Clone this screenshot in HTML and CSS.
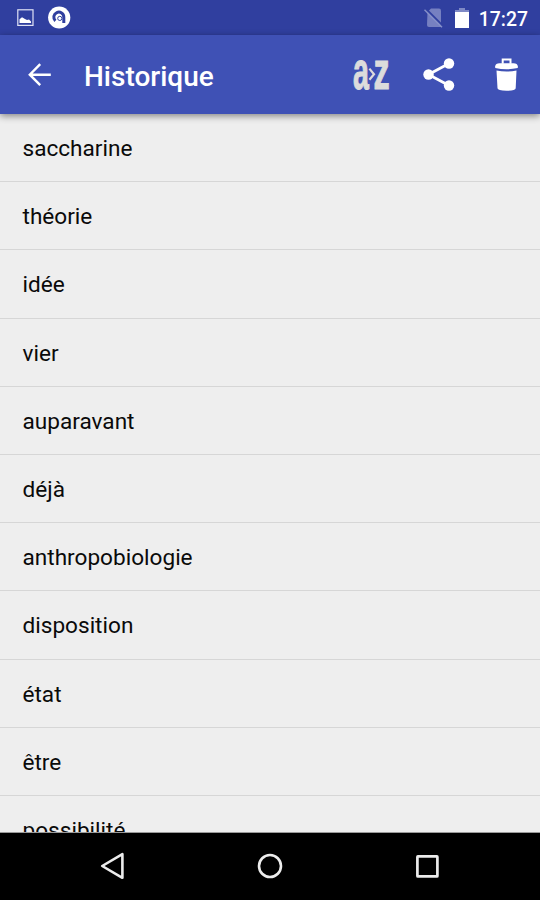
FILE: index.html
```html
<!DOCTYPE html>
<html lang="fr">
<head>
    <meta charset="UTF-8">
    <meta name="viewport" content="width=device-width, initial-scale=1.0">
    <title>Historique</title>
    <link rel="stylesheet" href="styles.css">
</head>
<body>
    <div class="screen">
        <div class="status-bar">
            <svg class="status-icon" width="18" height="18" viewBox="0 0 18 18">
                <rect x="0.8" y="0.8" width="15.2" height="15.6" fill="none" stroke="#dfe2f5" stroke-width="1.2"/>
                <path d="M2.5 14V10.2L5 8.2L8 10L10 11L12 10.5L14 12.5V14Z" fill="#fff"/>
            </svg>
            <svg class="status-icon" width="23" height="23" viewBox="0 0 23 23">
                <circle cx="11.2" cy="11.5" r="11.1" fill="#fff"/>
                <path d="M7.4 14.8A5 5 0 1 1 15.8 11.2V17" fill="none" stroke="#303f9f" stroke-width="3"/>
                <circle cx="11.8" cy="12.4" r="2.1" fill="#fff" stroke="#303f9f" stroke-width="1"/>
            </svg>
            <span class="spacer"></span>
            <svg class="no-sim" width="20" height="20" viewBox="0 0 20 20">
                <path d="M3.5 4L7 0.5H15Q17 0.5 17 2.5V19H5Q3 19 3 17Z" fill="#7680c1"/>
                <path d="M1.5 0.5L19 18" stroke="#303f9f" stroke-width="2"/>
                <path d="M0.5 1.8L18 19.3" stroke="#8790c9" stroke-width="1.5"/>
            </svg>
            <svg class="battery" width="14" height="20" viewBox="0 0 14 20">
                <path d="M0 4V2H4V0H10V2H14V4Z" fill="#7f89c5"/>
                <path d="M0 4H14V20H0Z" fill="#fff"/>
            </svg>
            <span class="clock">17:27</span>
        </div>
        <div class="toolbar">
            <svg class="back" width="24" height="24" viewBox="0 0 24 24">
                <path d="M12.2 1.2L1.8 11.7L12.2 22.2M1.8 11.7H22.8" fill="none" stroke="#fff" stroke-width="2.4"/>
            </svg>
            <h1>Historique</h1>
            <span class="spacer"></span>
            <svg class="sort" width="40" height="76" viewBox="-1 -21 40 76">
                <g class="sort-letters">
                    <text transform="translate(0 30.8) scale(0.54 1)">a</text>
                    <text transform="translate(20.6 30.8) scale(0.61 1)">z</text>
                </g>
                <path d="M16.4 10.6L21 16.2L16.4 21.8" fill="none" stroke="#3f51b5" stroke-width="4"/>
                <path d="M16.4 10.6L21 16.2L16.4 21.8" fill="none" stroke="#dcdcdc" stroke-width="2.2"/>
            </svg>
            <svg class="share" width="32" height="34" viewBox="0 0 32 34">
                <path d="M26 5.5L5.5 16.5L26 27.5" fill="none" stroke="#fff" stroke-width="2.8"/>
                <circle cx="26" cy="5.5" r="5.2" fill="#fff"/>
                <circle cx="5.5" cy="16.5" r="5.2" fill="#fff"/>
                <circle cx="26" cy="27.5" r="5.2" fill="#fff"/>
            </svg>
            <svg class="trash" width="24" height="34" viewBox="0 0.7 24 34">
                <path d="M7.7 6.5V2.1H15.5V6.5" fill="none" stroke="#fff" stroke-width="2"/>
                <path d="M0.2 10.8V9Q0.5 6 4.5 6H18.5Q22.5 6 22.8 9V10.8Q11.5 13.2 0.2 10.8Z" fill="#fff"/>
                <path d="M1.5 13.2Q11.5 15.3 21.5 13.2L20.7 31Q20.5 33.4 11.5 33.5Q2.7 33.4 2.5 31Z" fill="#fff"/>
            </svg>
        </div>
        <ul class="history">
            <li>saccharine</li>
            <li>théorie</li>
            <li>idée</li>
            <li>vier</li>
            <li>auparavant</li>
            <li>déjà</li>
            <li>anthropobiologie</li>
            <li>disposition</li>
            <li>état</li>
            <li>être</li>
            <li>possibilité</li>
        </ul>
        <div class="nav-bar">
            <svg width="28" height="28" viewBox="0 0 28 28">
                <path d="M23.4 2.2V25.8L3.2 14Z" fill="none" stroke="#ececec" stroke-width="2.6" stroke-linejoin="round"/>
            </svg>
            <svg width="28" height="28" viewBox="0 0 28 28">
                <circle cx="14" cy="14" r="11" fill="none" stroke="#ececec" stroke-width="2.6"/>
            </svg>
            <svg width="28" height="28" viewBox="0 0 28 28">
                <rect x="4.4" y="4.4" width="20" height="20" rx="0.5" fill="none" stroke="#ececec" stroke-width="2.7" stroke-linejoin="round"/>
            </svg>
        </div>
    </div>
</body>
</html>
```

FILE: styles.css
```css
body {
    margin: 0;
    font-family: Roboto, sans-serif;
    background-color: #000;
}
.screen {
    display: flex;
    flex-direction: column;
    width: 540px;
    height: 900px;
    overflow: hidden;
}
svg {
    display: block;
    flex: none;
}
.spacer {
    flex: 1;
}
.status-bar {
    display: flex;
    align-items: center;
    flex: none;
    height: 35px;
    padding: 0 12px 0 17px;
    box-sizing: border-box;
    background-color: #303f9f;
}
.status-icon {
    margin-right: 13px;
}
.no-sim {
    margin-right: 11px;
}
.battery {
    margin-right: 10px;
}
.clock {
    font-size: 19.4px;
    font-weight: 500;
    line-height: 33px;
    color: #fff;
    padding-top: 3px;
}
.toolbar {
    display: flex;
    align-items: center;
    flex: none;
    height: 79px;
    padding: 0 21px 0 28px;
    box-sizing: border-box;
    background-color: #3f51b5;
    box-shadow: 0 2px 7px rgba(0, 0, 0, 0.45);
    z-index: 1;
}
h1 {
    margin: 4px 0 0 32px;
    font-size: 28px;
    font-weight: 500;
    line-height: 32px;
    color: #fff;
}
.sort-letters {
    font-family: "Liberation Sans", Arial, sans-serif;
    font-size: 53px;
    font-weight: bold;
    fill: #dcdcdc;
    stroke: #dcdcdc;
    stroke-width: 1px;
}
.share {
    margin-left: 31px;
}
.trash {
    margin-left: 40px;
}
.history {
    flex: 1;
    min-height: 0;
    margin: 0;
    padding: 0;
    list-style: none;
    overflow: hidden;
    background-color: #eee;
    border-bottom: 1px solid #999;
}
.history li {
    height: 68.2px;
    padding-left: 22.5px;
    box-sizing: border-box;
    font-size: 22.6px;
    line-height: 69.6px;
    color: #0a0a0a;
    border-bottom: 1px solid #d6d6d6;
}
.nav-bar {
    display: flex;
    align-items: center;
    justify-content: center;
    flex: none;
    gap: 129px;
    height: 67px;
    padding-bottom: 1px;
    box-sizing: border-box;
    background-color: #000;
}
```
